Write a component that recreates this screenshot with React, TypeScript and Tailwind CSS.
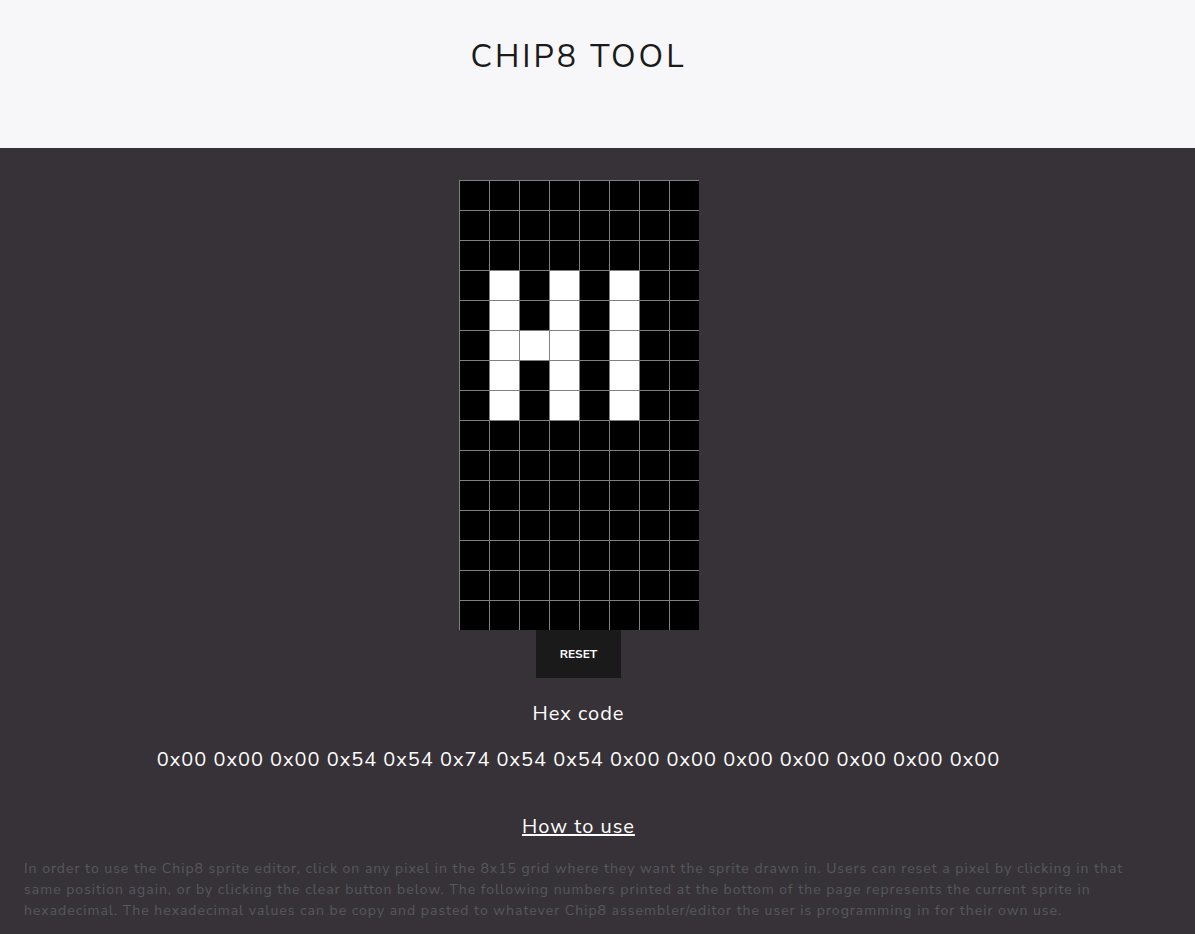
import { useState } from 'react';

const COLUMNS = 8;

const INITIAL_SPRITE: number[] = [
  0x00, 0x00, 0x00, 0x54, 0x54, 0x74, 0x54, 0x54, 0x00, 0x00, 0x00, 0x00, 0x00, 0x00, 0x00,
];

function bitMask(column: number): number {
  return 1 << (COLUMNS - 1 - column);
}

function toHex(row: number): string {
  return '0x' + row.toString(16).toUpperCase().padStart(2, '0');
}

type GridProps = {
  rows: number[];
  onToggle: (row: number, column: number) => void;
};

function SpriteGrid({ rows, onToggle }: GridProps) {
  return (
    <div role="group" aria-label="Sprite pixels" className="grid grid-cols-8">
      {rows.map((bits, row) =>
        Array.from({ length: COLUMNS }, (_, column) => {
          const lit = (bits & bitMask(column)) !== 0;
          return (
            <button
              key={`${row}-${column}`}
              type="button"
              aria-label={`Row ${row + 1}, column ${column + 1}`}
              aria-pressed={lit}
              onClick={() => onToggle(row, column)}
              className={`size-[30px] border-t border-l border-[#808080] ${lit ? 'bg-white' : 'bg-black'}`}
            />
          );
        }),
      )}
    </div>
  );
}

export default function App() {
  const [rows, setRows] = useState<number[]>(INITIAL_SPRITE);

  const toggle = (row: number, column: number) =>
    setRows((current) => current.map((bits, i) => (i === row ? bits ^ bitMask(column) : bits)));

  return (
    <div className="flex min-h-screen flex-col bg-[#373237] font-['Nunito_Sans','Lato',sans-serif] tracking-[1px]">
      <header className="bg-[#f7f7f9] pt-9 pr-[38px] pb-[70px]">
        <h1 className="text-center text-[32px] leading-[42px] tracking-[3px] text-[#1a1a1a] uppercase">Chip8 Tool</h1>
      </header>
      <main className="flex flex-col items-center pt-8 pr-[38px] text-white">
        <SpriteGrid rows={rows} onToggle={toggle} />
        <button
          type="button"
          onClick={() => setRows((current) => current.map(() => 0))}
          className="bg-[#1a1a1a] px-6 py-[15px] text-xs leading-[18px] font-bold tracking-normal uppercase"
        >
          Reset
        </button>
        <h2 className="pt-6 text-xl leading-6">Hex code</h2>
        <p className="px-6 pt-[22px] text-center text-xl leading-6">{rows.map(toHex).join(' ')}</p>
        <h2 className="pt-[43px] text-xl leading-6 underline">How to use</h2>
        <p className="px-6 pt-[19px] text-sm leading-[21px] text-[#55595c]">
          In order to use the Chip8 sprite editor, click on any pixel in the 8x15 grid where they want the sprite drawn
          in. Users can reset a pixel by clicking in that same position again, or by clicking the clear button below.
          The following numbers printed at the bottom of the page represents the current sprite in hexadecimal. The
          hexadecimal values can be copy and pasted to whatever Chip8 assembler/editor the user is programming in for
          their own use.
        </p>
      </main>
    </div>
  );
}
